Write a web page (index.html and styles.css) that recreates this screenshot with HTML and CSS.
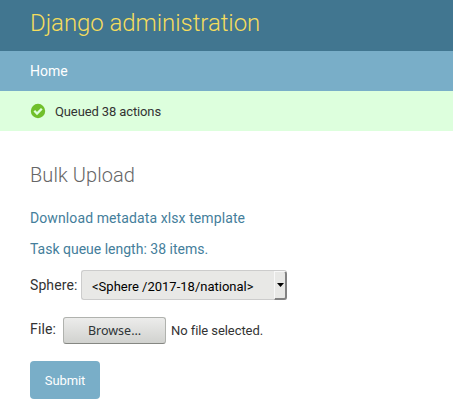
FILE: index.html
```html
<!DOCTYPE html>
<html lang="en">
<head>
<meta charset="utf-8">
<title>Bulk Upload</title>
<link rel="stylesheet" href="styles.css">
</head>
<body>
<header class="header">Django administration</header>
<nav class="breadcrumbs">Home</nav>
<div class="message">
<svg class="check" viewBox="0 0 16 16" width="16" height="16"><circle cx="8" cy="8" r="7.2" fill="#70bf2b"/><path d="M4.3 7.8 7 10.5l4.8-4.8" fill="none" stroke="#dfd" stroke-width="2.3"/></svg>
<span>Queued 38 actions</span>
</div>
<main class="content">
<h1 class="title">Bulk Upload</h1>
<a class="link link-template">Download metadata xlsx template</a>
<a class="link">Task queue length: 38 items.</a>
<div class="row row-select"><span class="label">Sphere:</span>
<div class="select"><span class="value">&lt;Sphere /2017-18/national&gt;</span><span class="arrow"><svg width="7" height="4"><path d="M0 0h7L3.5 4z" fill="#000"/></svg></span></div></div>
<div class="row row-file"><span class="label">File:</span><div class="browse">Browse…</div><span class="nofile">No file selected.</span></div>
<div class="submit">Submit</div>
</main>
</body>
</html>
```
FILE: styles.css
```css
* { box-sizing: border-box; }
body { margin: 0; background: #fff; color: #333; font: 14px/20px Roboto, sans-serif; height: 419px; overflow: hidden; }
.header { height: 51px; padding: 8px 30px 0; background: #417690; color: #f5dd5d; font-size: 24px; line-height: 31px; font-weight: 300; letter-spacing: -0.06px; }
.breadcrumbs { height: 40px; padding: 10px 30px; background: #79aec8; color: #fff; }
.message { height: 40px; padding: 0 30px; background: #dfd; display: flex; align-items: center; gap: 9px; font-size: 13px; letter-spacing: -0.12px; }
.message span { padding-top: 2px; }
.content { padding: 31px 30px 0; }
.title { margin: 0 0 20px; font-size: 20px; line-height: 26px; font-weight: 300; color: #666; letter-spacing: 0.07px; }
.link { display: block; height: 20px; margin-bottom: 11px; color: #447e9b; }
.link-template { letter-spacing: 0.1px; }
.row { display: flex; }
.label { flex: none; }
.row-select { height: 30px; line-height: 30px; }
.row-select .label { width: 51px; letter-spacing: 0.1px; }
.select { display: flex; width: 206px; height: 30px; border: 1px solid #ccc; border-right: 0; border-radius: 3px; background: #e8e8e6; color: #000; font-size: 13px; line-height: 31px; }
.value { flex: 1; padding-left: 10px; }
.arrow { width: 13px; height: 29px; display: flex; align-items: center; justify-content: center; border: 1px solid #f8f8f8; border-right: 2px solid #828282; border-bottom: 2px solid #828282; border-radius: 0 3px 3px 0; }
.row-file { height: 27px; margin-top: 17px; line-height: 24px; }
.row-file .label { width: 33px; letter-spacing: 0.15px; }
.browse { flex: none; width: 103px; height: 27px; margin-right: 5px; border: 1px solid #b0b2ae; border-bottom-color: #858782; border-radius: 3px; background: linear-gradient(#ececeb, #d1d2cf); text-align: center; color: #2e3436; font: 12.5px/25px "Noto Sans", sans-serif; }
.nofile { font-size: 13px; line-height: 28px; letter-spacing: -0.07px; }
.submit { width: 70px; height: 38px; margin-top: 17px; border-radius: 4px; background: #79aec8; color: #fff; font-size: 13px; line-height: 39px; text-align: center; letter-spacing: -0.1px; }
```
